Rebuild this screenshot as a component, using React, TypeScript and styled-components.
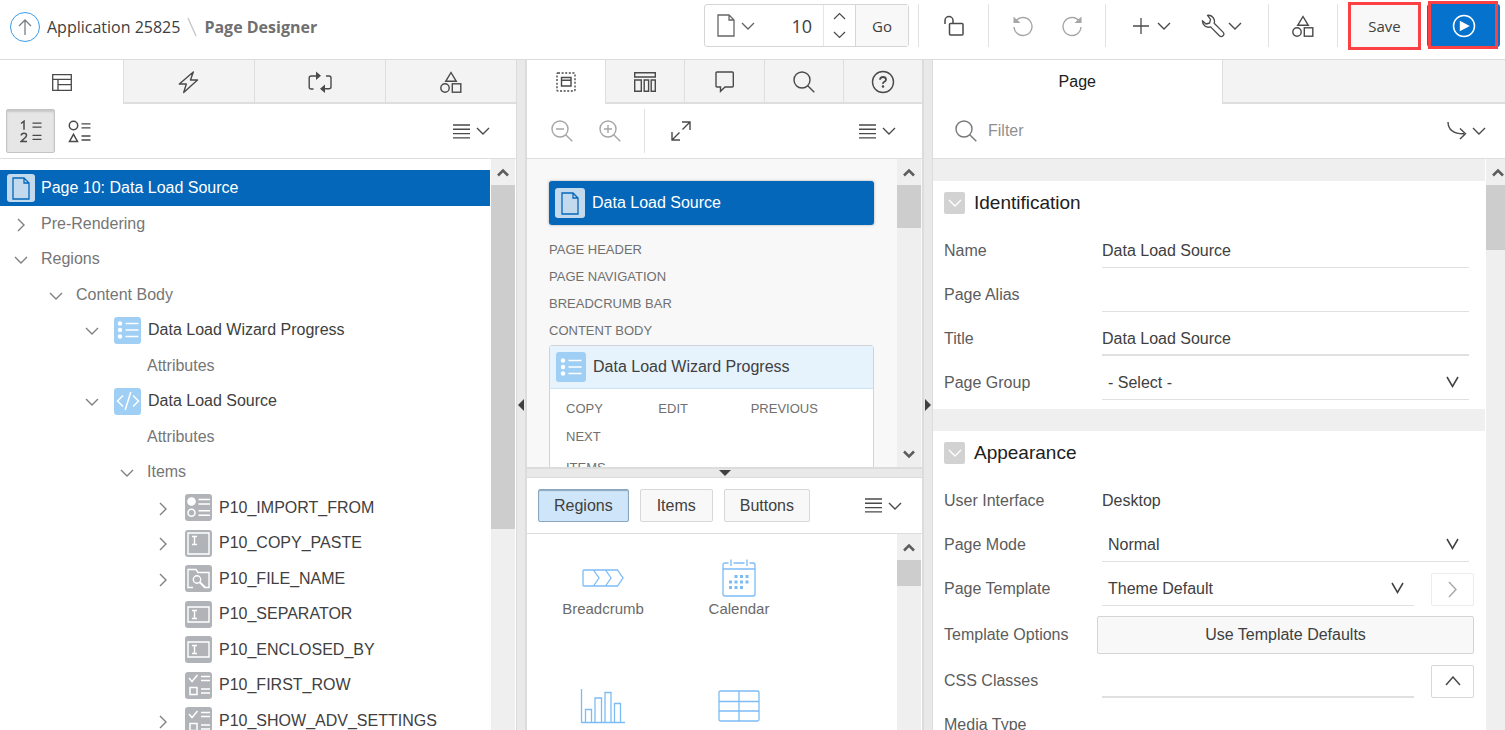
import React from "react";
import styled, { createGlobalStyle, css } from "styled-components";

const sans = `"Liberation Sans", Arial, sans-serif`;
const humanist = `"Open Sans", "Noto Sans", sans-serif`;

const GlobalStyle = createGlobalStyle`
  *, *::before, *::after { box-sizing: border-box; }
  body { margin: 0; background: #fff; color: #404040; font: 16px/20px ${sans}; }
  button, input, select { font: inherit; color: inherit; margin: 0; }
  ul { list-style: none; margin: 0; padding: 0; }
  svg { display: block; flex: none; }
`;

/* ---------- icons ---------- */

type IconProps = { w: number; h: number; sw?: number; color?: string; children: React.ReactNode };

const Icon = ({ w, h, sw = 1, color = "currentColor", children }: IconProps) => (
  <svg
    width={w}
    height={h}
    viewBox={`0 0 ${w} ${h}`}
    fill="none"
    stroke={color}
    strokeWidth={sw}
    aria-hidden="true"
  >
    {children}
  </svg>
);

const ChevronDown = () => (
  <Icon w={14} h={8} sw={1.4}><path d="M1 1l6 6 6-6" /></Icon>
);
const ChevronRight = () => (
  <Icon w={8} h={14} sw={1.4}><path d="M1 1l6 6-6 6" /></Icon>
);
const LargeRight = () => (
  <Icon w={9} h={17} sw={1.4}><path d="M1 1l7 7.500-7 7.500" /></Icon>
);
const ChevronUp = () => (
  <Icon w={16} h={10} sw={1.5}><path d="M1 9l7-8 7 8" /></Icon>
);
const SmallUp = () => (
  <Icon w={13} h={8} sw={1.2}><path d="M1 7l5.500-5.500 5.500 5.500" /></Icon>
);
const SmallDown = () => (
  <Icon w={13} h={8} sw={1.2}><path d="M1 1l5.500 5.500 5.500-5.500" /></Icon>
);
const MenuLines = () => (
  <Icon w={17} h={15} sw={1.4}><path d="M0 1h17M0 5.300h17M0 9.600h17M0 13.900h17" /></Icon>
);
const ArrowUp = () => (
  <Icon w={14} h={16} sw={1.3} color="#7a7f85"><path d="M7 16V1M1 7l6-6 6 6" /></Icon>
);
const PageIcon = () => (
  <Icon w={18} h={23} sw={1.3}><path d="M1 1h11l5 5v16H1zM12 1v5h5" /></Icon>
);
const Slash = () => (
  <Icon w={10} h={20} sw={1.3} color="#c4c4c4"><path d="M1 1l8 18" /></Icon>
);
const LockOpen = () => (
  <Icon w={20} h={21} sw={1.5}>
    <path d="M1 9V5.500a4 4 0 0 1 8 0V8" />
    <rect x="5.500" y="8.500" width="13.500" height="11.500" rx="1" />
  </Icon>
);
const Undo = () => (
  <Icon w={22} h={22} sw={1.4}>
    <path d="M3.500 6.500A9 9 0 1 1 2 12" />
    <path d="M1.500 1.500v6.500h7z" fill="currentColor" stroke="none" />
  </Icon>
);
const Redo = () => (
  <Icon w={22} h={22} sw={1.4}>
    <path d="M18.500 6.500A9 9 0 1 0 20 12" />
    <path d="M20.500 1.500v6.500h-7z" fill="currentColor" stroke="none" />
  </Icon>
);
const Plus = () => (
  <Icon w={18} h={18} sw={1.3}><path d="M9 1v16M1 9h16" /></Icon>
);
const Wrench = () => (
  <Icon w={24} h={24} sw={1.3}>
    <path
      d="M6.500 1.300A6.200 6.200 0 0 1 13.200 9.300L22 18.100a2.500 2.500 0 0 1-3.600 3.600L9.600 12.900A6.200 6.200 0 0 1 1.400 6.700l3.600 3.300 3.600-1 .9-3.600z"
      strokeLinejoin="round"
    />
  </Icon>
);
const Shapes = () => (
  <Icon w={22} h={22} sw={1.4}>
    <path d="M11 1.500l5.300 8.800H5.700z" />
    <circle cx="5" cy="17" r="4.200" />
    <rect x="12.300" y="12.800" width="8.500" height="8.400" />
  </Icon>
);
const Play = () => (
  <Icon w={24} h={24} sw={1.5} color="#fff">
    <circle cx="12" cy="12" r="10.500" />
    <path d="M7.800 6.800v10.400l10-5.200z" fill="#fff" stroke="none" />
  </Icon>
);
const LayoutIcon = () => (
  <Icon w={20} h={17} sw={1.3}><path d="M.700 .700h18.600v15.600H.700zM.700 5.300h18.600M6 5.300v11M6 10.700h13.300" /></Icon>
);
const Bolt = () => (
  <Icon w={21} h={23} sw={1.4}><path d="M15.300 1L1.300 13h7L5.700 21.500 19.500 9h-7z" strokeLinejoin="round" /></Icon>
);
const Cycle = () => (
  <Icon w={24} h={22} sw={1.4}>
    <path d="M5.500 18H3.200q-2 0-2-2V7q0-2 2-2H8M18 5h3q2 0 2 2v8.700q0 2-2 2h-4" />
    <path d="M8 .500v8.600L13 4.800zM17 13.400v8.600l-5-4.300z" fill="currentColor" stroke="none" />
  </Icon>
);
const RenderIcon = () => (
  <Icon w={20} h={20} sw={1.4}>
    <rect x="1" y="1" width="18" height="18" rx="1" strokeDasharray="2 1.600" />
    <path d="M5.500 5.500h9.500v8.500H5.500zM5.500 8.300h9.500" />
  </Icon>
);
const ColumnsIcon = () => (
  <Icon w={22} h={20} sw={1.4}>
    <path d="M.700 .700h20.600v4.300H.700zM.700 8h6.600v11.300H.700zM10.200 8h4.400v11.300h-4.400zM17.200 8h4.100v11.300h-4.100z" />
  </Icon>
);
const Comment = () => (
  <Icon w={19} h={22} sw={1.4}><path d="M2 1h15.300q1 0 1 1v13q0 1-1 1H10l-4.500 4.300V16H2q-1 0-1-1V2q0-1 1-1z" /></Icon>
);
const Search = () => (
  <Icon w={22} h={22} sw={1.4}><circle cx="9" cy="9" r="8" /><path d="M14.700 14.700l6.600 6.600" /></Icon>
);
const ZoomOut = () => (
  <Icon w={22} h={22} sw={1.4}><circle cx="9" cy="9" r="8" /><path d="M14.700 14.700l6.600 6.600M5 9h8" /></Icon>
);
const ZoomIn = () => (
  <Icon w={22} h={22} sw={1.4}><circle cx="9" cy="9" r="8" /><path d="M14.700 14.700l6.600 6.600M5 9h8M9 5v8" /></Icon>
);
const Help = () => (
  <Icon w={24} h={24} sw={1.4}>
    <circle cx="12" cy="12" r="10.500" />
    <path d="M9 9.700q.2-2.700 3-2.700t3 2.500q0 1.500-1.600 2.300T12 14" strokeWidth="1.800" />
    <circle cx="12" cy="16.500" r=".6" fill="currentColor" />
  </Icon>
);
const OneTwo = () => (
  <Icon w={22} h={23} sw={1.5}>
    <path d="M1 3.500l3-2.300v8.600M1.200 15.500q.3-2.200 2.800-2.200t2.500 2q0 1.300-1.700 2.700L1.200 21.500H7" />
    <path d="M12.500 3.200h9M12.500 7.200h9M12.500 15.400h9M12.500 19.400h9" strokeWidth="1.300" />
  </Icon>
);
const ShapeList = () => (
  <Icon w={23} h={23} sw={1.5}>
    <circle cx="5.500" cy="5.500" r="4.200" />
    <path d="M5.500 14.300l4 7.200h-8z" />
    <path d="M13.500 3.800h9M13.500 7.800h9M13.500 16h9M13.500 20h9" strokeWidth="1.300" />
  </Icon>
);
const Expand = () => (
  <Icon w={20} h={20} sw={1.4}><path d="M11.500 8.500L19 1M11 1h8v8M8.500 11.500L1 19M1 11v8h8" /></Icon>
);
const Jump = () => (
  <Icon w={20} h={18} sw={1.4}><path d="M1 0q.3 12 16 11.800M13 6.500l5.500 5.300-5.500 5.300" /></Icon>
);
const ListGlyph = () => (
  <Icon w={22} h={20} sw={1.4}>
    <path d="M8.500 3.500h13M8.500 10h13M8.500 16.500h13" />
    <g fill="currentColor" stroke="none">
      <circle cx="3" cy="3.500" r="2.200" /><circle cx="3" cy="10" r="2.200" /><circle cx="3" cy="16.500" r="2.200" />
    </g>
  </Icon>
);
const CodeGlyph = () => (
  <Icon w={24} h={20} sw={1.5}><path d="M7 4.500L1.500 10 7 15.500M17 4.500l5.500 5.500-5.500 5.500M14.800 1L9.200 19" /></Icon>
);
const RadioGlyph = () => (
  <Icon w={23} h={21} sw={1.5}>
    <circle cx="4.500" cy="4.500" r="4.300" fill="currentColor" stroke="none" />
    <circle cx="4.500" cy="15.800" r="3.500" />
    <path d="M11.500 2.500H23M11.500 7H23M11.500 13.700H23M11.500 18.200H23" />
  </Icon>
);
const TextareaGlyph = () => (
  <Icon w={23} h={23} sw={1.4}><path d="M1 1h21v21H1zM5 4.500h5M7.500 4.500v8M5 12.500h5" /></Icon>
);
const FileGlyph = () => (
  <Icon w={23} h={21} sw={1.4}>
    <path d="M6 19.500H1V1.500h8l2 3h11v15h-4" />
    <circle cx="10" cy="11.500" r="3.700" />
    <path d="M12.800 14.300l5.500 5.500" strokeWidth="2" />
  </Icon>
);
const TextGlyph = () => (
  <Icon w={23} h={17} sw={1.4}><path d="M1 1h21v15H1zM5 4.500h5M7.500 4.500v8M5 12.500h5" /></Icon>
);
const CheckGlyph = () => (
  <Icon w={22} h={22} sw={1.5}>
    <path d="M1 4l3 3.500L9.500 1M2 13.500h7v7H2zM13 2.500h9M13 6.500h9M13 15h9M13 19h9" />
  </Icon>
);
const BreadcrumbArt = () => (
  <Icon w={42} h={18} sw={1.3}>
    <path d="M2 1h33.500L41 9l-5.500 8H2q-1 0-1-1V2q0-1 1-1zM11.500 1L17 9l-5.500 8M23.500 1L29 9l-5.500 8" />
  </Icon>
);
const CalendarArt = () => (
  <Icon w={34} h={38} sw={1.3}>
    <path d="M6.500 4H3Q1 4 1 6v29q0 2 2 2h28q2 0 2-2V6q0-2-2-2h-3.500M11.500 4h11M1 10h32M9 .500v6.500M25 .500v6.500" />
    <path d="M12.500 17.500h15M7 23h20.500M7 28.500h15" strokeWidth="3" strokeDasharray="3 2.500" />
  </Icon>
);
const ChartArt = () => (
  <Icon w={46} h={36} sw={1.3}>
    <path d="M1.500 1v33.500H45M5.500 34.500V21.500h6v13M15 34.500V10h6.500v24.500M25 34.500V4.500h6v30M34.500 34.500V15.500h6v19" />
  </Icon>
);
const TableArt = () => (
  <Icon w={42} h={32} sw={1.3}>
    <rect x="1" y="1" width="40" height="30" rx="1.500" />
    <path d="M21 1v30M1 11.500h40M1 21h40" />
  </Icon>
);

/* ---------- header ---------- */

const Shell = styled.div`
  display: flex;
  flex-direction: column;
  height: 100vh;
  overflow: hidden;
`;

const Header = styled.header`
  flex: none;
  display: flex;
  align-items: center;
  height: 60px;
  padding: 0 5px 8px 10px;
  border-bottom: 1px solid #dcdcdc;
  font-family: ${humanist};
`;

const Crumbs = styled.nav`
  display: flex;
  align-items: center;
  gap: 7px;
  padding-top: 2px;
`;

const UpLink = styled.a`
  display: grid;
  place-items: center;
  width: 30px;
  height: 30px;
  border: 1px solid #3a9bea;
  border-radius: 50%;
`;

const CrumbLink = styled.a`
  color: #404040;
  text-decoration: none;
`;

const CrumbCurrent = styled.strong`
  color: #707070;
`;

const HeaderTools = styled.div`
  display: flex;
  align-items: center;
  height: 43px;
  margin-left: auto;
`;

const bare = css`
  display: inline-flex;
  align-items: center;
  justify-content: center;
  padding: 0;
  border: 0;
  background: none;
`;

const IconButton = styled.button<{ $gap?: number; $muted?: boolean }>`
  ${bare}
  gap: ${(p) => p.$gap ?? 0}px;
  color: ${(p) => (p.$muted ? "#a6a6a6" : "#4a4a4a")};
`;

const ToolGroup = styled.div<{ $width: number; $gap?: number }>`
  display: flex;
  align-items: center;
  justify-content: center;
  gap: ${(p) => p.$gap ?? 0}px;
  width: ${(p) => p.$width}px;
  height: 100%;
  border-left: 1px solid #e2e2e2;
`;

const PageSelector = styled.div`
  display: flex;
  height: 100%;
  margin-right: 9px;
  border: 1px solid #d6d6d6;
  border-radius: 3px;
`;

const PagePicker = styled(IconButton)`
  width: 62px;
  color: #666;
`;

const PageNumber = styled.input`
  width: 57px;
  padding: 0 11px 0 0;
  border: 0;
  border-right: 1px solid #e6e6e6;
  background: none;
  text-align: right;
  font-size: 18px;
`;

const Stepper = styled.div`
  display: grid;
  width: 31px;
  padding: 2px 0;
`;

const GoButton = styled.button`
  width: 53px;
  padding: 0;
  border: 0;
  border-left: 1px solid #d6d6d6;
  background: #f8f8f8;
  font-size: 15px;
`;

const SaveButton = styled.button`
  width: 73px;
  height: 48px;
  margin: 0 6px 0 10px;
  border: 3px solid #fb4143;
  background: #f8f8f8;
  font-size: 15px;
`;

const RunButton = styled.button`
  ${bare}
  position: relative;
  width: 73px;
  height: 43px;
  border-radius: 3px;
  background: #0572ce;

  &::after {
    content: "";
    position: absolute;
    inset: -3px 2px -2px 1px;
    border: 3px solid #fb4143;
  }
`;

/* ---------- panels ---------- */

const Workspace = styled.main`
  flex: 1;
  min-height: 0;
  display: grid;
  grid-template-columns: minmax(0, 516fr) 11px minmax(0, 395fr) 11px minmax(0, 572fr);
`;

const Panel = styled.section`
  display: flex;
  flex-direction: column;
  min-width: 0;
  min-height: 0;
`;

const TabBar = styled.div`
  flex: none;
  display: flex;
  height: 44px;
`;

const Tab = styled.button<{ $active?: boolean; $basis?: string }>`
  ${bare}
  flex: ${(p) => p.$basis ?? "1 1 0"};
  color: #4a4a4a;
  background: ${(p) => (p.$active ? "#fff" : "#f3f3f3")};
  box-shadow: ${(p) => (p.$active ? "none" : "inset 0 -2px #dedede")};

  & + & { border-left: 1px solid #dedede; }
`;

const TextTab = styled(Tab)`
  color: #202020;
`;

const TabFiller = styled.div`
  flex: 283 1 0;
  background: #f3f3f3;
  border-left: 1px solid #dedede;
  border-bottom: 2px solid #dedede;
`;

const Toolbar = styled.div<{ $pad: string; $height?: number }>`
  flex: none;
  display: flex;
  align-items: center;
  height: ${(p) => p.$height ?? 55}px;
  padding: ${(p) => p.$pad};
  border-bottom: 1px solid #dedede;
`;

const ToggleButton = styled.button<{ $on?: boolean }>`
  ${bare}
  width: 49px;
  height: 44px;
  color: #4a4a4a;
  border-radius: 2px;
  ${(p) =>
    p.$on &&
    css`
      background: #e6e6e6;
      border: 1px solid #c4c4c4;
      box-shadow: inset 0 2px 2px #c8c8c8;
    `}
`;

const ToolButton = styled(IconButton)`
  width: 48px;
  height: 44px;
`;

const ToolbarSection = styled.div`
  display: flex;
  align-items: center;
  justify-content: center;
  width: 72px;
  height: 44px;
  margin-left: 10px;
  border-left: 1px solid #e2e2e2;
`;

const MenuButton = styled(IconButton)`
  margin-left: auto;
  gap: 6px;
`;

const ScrollArea = styled.div<{ $bg?: string }>`
  flex: 1;
  min-height: 0;
  display: flex;
  background: ${(p) => p.$bg ?? "#fff"};
`;

const ScrollBody = styled.div`
  flex: 1;
  min-width: 0;
  overflow: hidden;
`;

const Track = styled.div<{ $width: number }>`
  flex: none;
  display: flex;
  flex-direction: column;
  width: ${(p) => p.$width}px;
  margin: 0 1px;
  overflow: hidden;
  background: #efefef;
`;

const EdgeTrack = styled(Track)`
  margin-right: 0;
`;

const TrackButton = styled.button`
  ${bare}
  flex: none;
  width: 24px;
  height: 26px;
  color: #5c5c5c;
`;

const Thumb = styled.div<{ $height: number }>`
  flex: 0 1 ${(p) => p.$height}px;
  background: #cdcdcd;
`;

const TrackEnd = styled.div`
  margin-top: auto;
`;

const TrackUp = () => (
  <TrackButton aria-label="Scroll up">
    <Icon w={12} h={9} sw={2.5}><path d="M1 7.500l5-5 5 5" /></Icon>
  </TrackButton>
);
const TrackDown = () => (
  <TrackButton aria-label="Scroll down">
    <Icon w={12} h={9} sw={2.5}><path d="M1 1.500l5 5 5-5" /></Icon>
  </TrackButton>
);

const Splitter = styled.div<{ $side: "left" | "right" }>`
  display: flex;
  align-items: center;
  justify-content: center;
  padding-top: 20px;
  background: #e9e9e9;
  border-style: solid;
  border-color: #dcdcdc;
  border-width: ${(p) => (p.$side === "left" ? "0 2px 0 1px" : "0 1px 0 2px")};
`;

const RowSplitter = styled.div`
  flex: none;
  display: flex;
  justify-content: center;
  height: 11px;
  background: #e9e9e9;
  border-top: 2px solid #dcdcdc;
  border-bottom: 1px solid #dcdcdc;
`;

const SplitHandle = styled.button`
  ${bare}
  color: #404040;
`;

/* ---------- tree ---------- */

const indent = [0, 35, 71, 106, 142];

const Tree = styled.ul`
  padding-top: 11px;
`;

const TreeRow = styled.li<{ $depth: number; $tone: "selected" | "muted" | "strong" }>`
  display: flex;
  align-items: center;
  height: 36px;
  padding-left: ${(p) => indent[p.$depth]}px;
  white-space: nowrap;
  color: ${(p) => ({ selected: "#fff", muted: "#767676", strong: "#404040" })[p.$tone]};
  background: ${(p) => (p.$tone === "selected" ? "#0467ba" : "none")};

  &:nth-child(even) { height: 35px; }
`;

const Twisty = styled.button`
  ${bare}
  width: 41px;
  height: 100%;
  padding-top: 2px;
  color: #808080;
`;

const TwistySpace = styled.span`
  width: 41px;
`;

const badgeColors = {
  page: ["#c3d9ee", "#0467ba"],
  region: ["#9fcff5", "#fff"],
  item: ["#b0b4b8", "#fff"],
};

const Badge = styled.span<{ $kind: keyof typeof badgeColors; $size?: number }>`
  display: grid;
  place-items: center;
  flex: none;
  width: ${(p) => p.$size ?? 27}px;
  height: ${(p) => p.$size ?? 27}px;
  border-radius: 3px;
  background: ${(p) => badgeColors[p.$kind][0]};
  color: ${(p) => badgeColors[p.$kind][1]};
`;

const TreeBadge = styled(Badge)`
  margin: 0 7px 0 2px;
`;

const RootBadge = styled(Badge)`
  margin: 0 6px 0 7px;
`;

type Node = { text: string; depth: number; open?: boolean; kind?: "region" | "item"; glyph?: React.ReactNode };

const nodes: Node[] = [
  { text: "Pre-Rendering", depth: 0, open: false },
  { text: "Regions", depth: 0, open: true },
  { text: "Content Body", depth: 1, open: true },
  { text: "Data Load Wizard Progress", depth: 2, open: true, kind: "region", glyph: <ListGlyph /> },
  { text: "Attributes", depth: 3 },
  { text: "Data Load Source", depth: 2, open: true, kind: "region", glyph: <CodeGlyph /> },
  { text: "Attributes", depth: 3 },
  { text: "Items", depth: 3, open: true },
  { text: "P10_IMPORT_FROM", depth: 4, open: false, kind: "item", glyph: <RadioGlyph /> },
  { text: "P10_COPY_PASTE", depth: 4, open: false, kind: "item", glyph: <TextareaGlyph /> },
  { text: "P10_FILE_NAME", depth: 4, open: false, kind: "item", glyph: <FileGlyph /> },
  { text: "P10_SEPARATOR", depth: 4, kind: "item", glyph: <TextGlyph /> },
  { text: "P10_ENCLOSED_BY", depth: 4, kind: "item", glyph: <TextGlyph /> },
  { text: "P10_FIRST_ROW", depth: 4, kind: "item", glyph: <CheckGlyph /> },
  { text: "P10_SHOW_ADV_SETTINGS", depth: 4, open: false, kind: "item", glyph: <CheckGlyph /> },
];

/* ---------- layout canvas ---------- */

const Canvas = styled(ScrollBody)`
  padding: 22px 22px 0;
`;

const PageCard = styled.div`
  display: flex;
  align-items: center;
  gap: 7px;
  height: 44px;
  margin-bottom: 11px;
  padding: 0 6px;
  border-radius: 3px;
  background: #0467ba;
  color: #fff;
  box-shadow: 0 0 2px 1px #d4d4d4;
`;

const Slot = styled.div`
  font-size: 13px;
  line-height: 27px;
  color: #707070;
  text-transform: uppercase;
`;

const RegionCard = styled.div`
  border: 1px solid #d0d4d8;
  border-radius: 3px 3px 0 0;
  background: #fff;
  margin-top: 1px;
`;

const RegionHead = styled.div`
  display: flex;
  align-items: center;
  gap: 7px;
  height: 43px;
  padding: 0 6px;
  border-bottom: 1px solid #cfe2f1;
  background: #e6f3fd;
`;

const SlotGrid = styled.div`
  display: grid;
  grid-template-columns: repeat(3, 1fr);
  row-gap: 1px;
  padding: 6px 30px 4px 16px;
`;

const SlotBlock = styled.div`
  padding: 0 16px;
`;

/* ---------- component gallery ---------- */

const Gallery = styled(Panel)`
  flex: none;
  height: 252px;
`;

const PillButton = styled.button<{ $on?: boolean }>`
  height: 33px;
  padding: 0 15px;
  min-width: 73px;
  margin-right: 11px;
  border: 1px solid ${(p) => (p.$on ? "#8ba6bf" : "#d8d8d8")};
  border-radius: 2px;
  background: ${(p) => (p.$on ? "#cfe6fa" : "#f8f8f8")};
  box-shadow: ${(p) => (p.$on ? "inset 0 1px 1px #8ba6bf" : "none")};
`;

const TileGrid = styled(ScrollBody)`
  display: grid;
  grid-template-columns: repeat(2, 136px);
  grid-auto-rows: 128px;
  padding: 25px 8px 0;
`;

const Tile = styled.button`
  ${bare}
  flex-direction: column;
  justify-content: flex-start;
  gap: 2px;
  font-size: 15px;
  color: #6a6a6a;
`;

const TileArt = styled.span`
  display: grid;
  place-items: center;
  height: 38px;
  color: #7cbcf5;
`;

/* ---------- property editor ---------- */

const FilterInput = styled.input`
  flex: 1;
  min-width: 0;
  margin-left: 11px;
  padding: 0;
  border: 0;
  outline: 0;
  background: none;
  &::placeholder { color: #909090; opacity: 1; }
`;

const FilterLabel = styled.label`
  flex: 1;
  display: flex;
  align-items: center;
  color: #777;
`;

const Group = styled.section`
  padding: 0 11px 4px;
  border-top: 22px solid #efefef;
`;

const GroupHead = styled.h2`
  display: flex;
  align-items: center;
  gap: 9px;
  height: 44px;
  margin: 0 0 4px;
  font-size: 19px;
  font-weight: 400;
  color: #202020;
`;

const GroupToggle = styled.button`
  ${bare}
  width: 21px;
  height: 22px;
  border-radius: 2px;
  background: #d2d2d2;
  color: #fff;
`;

const Property = styled.div<{ $tall?: boolean }>`
  display: grid;
  grid-template-columns: 153px minmax(0, 1fr);
  align-items: center;
  height: ${(p) => (p.$tall ? 48 : 44)}px;
`;

const PropertyLabel = styled.label`
  color: #5c5c5c;
`;

const Field = styled.div<{ $withButton?: boolean }>`
  display: flex;
  align-items: center;
  gap: 17px;
  padding: 0 ${(p) => (p.$withButton ? 0 : 5)}px 0 5px;
`;

const TextInput = styled.input<{ $heavy?: boolean }>`
  flex: 1;
  min-width: 0;
  height: 34px;
  padding: ${(p) => (p.$heavy ? "2px 0 0" : "1px 0 0")};
  border: 0;
  border-bottom: ${(p) => (p.$heavy ? 2 : 1)}px solid #e0e0e0;
  outline: 0;
  background: none;
`;

const SelectBox = styled.div`
  flex: 1;
  position: relative;
  color: #404040;

  svg {
    position: absolute;
    top: 10px;
    right: 10px;
    pointer-events: none;
  }
`;

const SelectInput = styled.select`
  appearance: none;
  width: 100%;
  height: 34px;
  padding: 0 30px 0 6px;
  border: 0;
  border-bottom: 1px solid #e0e0e0;
  background: none;
`;

const SquareButton = styled.button<{ $muted?: boolean }>`
  ${bare}
  width: 43px;
  height: 33px;
  border: 1px solid ${(p) => (p.$muted ? "#ececec" : "#d8d8d8")};
  border-radius: 2px;
  color: ${(p) => (p.$muted ? "#a6a6a6" : "#4a4a4a")};
`;

const WideButton = styled.button`
  height: 38px;
  border: 1px solid #d4d4d4;
  border-radius: 2px;
  background: #f8f8f8;
`;

const Select = ({ id, value }: { id: string; value: string }) => (
  <SelectBox>
    <SelectInput id={id} defaultValue={value}>
      <option>{value}</option>
    </SelectInput>
    <Icon w={13} h={12} sw={1.5}><path d="M1 1l5.500 9.500L12 1" /></Icon>
  </SelectBox>
);

const Menu = ({ label }: { label: string }) => (
  <MenuButton aria-label={label}>
    <MenuLines />
    <ChevronDown />
  </MenuButton>
);

const GroupTitle = ({ children }: { children: string }) => (
  <GroupHead>
    <GroupToggle aria-label={`Toggle ${children}`}><ChevronDown /></GroupToggle>
    {children}
  </GroupHead>
);

export default function App() {
  return (
    <Shell>
      <GlobalStyle />
      <Header>
        <Crumbs aria-label="Breadcrumb">
          <UpLink href="#up" aria-label="Up"><ArrowUp /></UpLink>
          <CrumbLink href="#app">Application 25825</CrumbLink>
          <Slash />
          <CrumbCurrent>Page Designer</CrumbCurrent>
        </Crumbs>
        <HeaderTools>
          <PageSelector>
            <PagePicker $gap={6} aria-label="Page finder"><PageIcon /><ChevronDown /></PagePicker>
            <PageNumber aria-label="Page number" defaultValue="10" />
            <Stepper>
              <IconButton aria-label="Next page"><SmallUp /></IconButton>
              <IconButton aria-label="Previous page"><SmallDown /></IconButton>
            </Stepper>
            <GoButton>Go</GoButton>
          </PageSelector>
          <ToolGroup $width={70}>
            <IconButton aria-label="Lock"><LockOpen /></IconButton>
          </ToolGroup>
          <ToolGroup $width={117} $gap={27}>
            <IconButton $muted aria-label="Undo"><Undo /></IconButton>
            <IconButton $muted aria-label="Redo"><Redo /></IconButton>
          </ToolGroup>
          <ToolGroup $width={163} $gap={30}>
            <IconButton $gap={7} aria-label="Create"><Plus /><ChevronDown /></IconButton>
            <IconButton $gap={3} aria-label="Utilities"><Wrench /><ChevronDown /></IconButton>
          </ToolGroup>
          <ToolGroup $width={69}>
            <IconButton aria-label="Shared components"><Shapes /></IconButton>
          </ToolGroup>
          <ToolGroup $width={1} />
          <SaveButton>Save</SaveButton>
          <RunButton aria-label="Save and run page"><Play /></RunButton>
        </HeaderTools>
      </Header>

      <Workspace>
        <Panel>
          <TabBar>
            <Tab $active $basis="124 1 0" aria-label="Rendering"><LayoutIcon /></Tab>
            <Tab $basis="130 1 0" aria-label="Dynamic actions"><Bolt /></Tab>
            <Tab $basis="131 1 0" aria-label="Processing"><Cycle /></Tab>
            <Tab $basis="131 1 0" aria-label="Page shared components"><Shapes /></Tab>
          </TabBar>
          <Toolbar $pad="0 26px 0 6px">
            <ToggleButton $on aria-label="Group by processing order"><OneTwo /></ToggleButton>
            <ToggleButton aria-label="Group by component type"><ShapeList /></ToggleButton>
            <Menu label="Tree menu" />
          </Toolbar>
          <ScrollArea>
            <ScrollBody>
              <Tree>
                <TreeRow $depth={0} $tone="selected">
                  <RootBadge $kind="page" $size={28}><PageIcon /></RootBadge>
                  Page 10: Data Load Source
                </TreeRow>
                {nodes.map((n, i) => (
                  <TreeRow key={i} $depth={n.depth} $tone={n.kind ? "strong" : "muted"}>
                    {n.open === undefined ? (
                      <TwistySpace />
                    ) : (
                      <Twisty aria-label={`Toggle ${n.text}`}>{n.open ? <ChevronDown /> : <ChevronRight />}</Twisty>
                    )}
                    {n.kind && <TreeBadge $kind={n.kind}>{n.glyph}</TreeBadge>}
                    {n.text}
                  </TreeRow>
                ))}
              </Tree>
            </ScrollBody>
            <Track $width={24}>
              <TrackUp />
              <Thumb $height={344} />
            </Track>
          </ScrollArea>
        </Panel>

        <Splitter $side="left">
          <SplitHandle aria-label="Collapse left panel">
            <Icon w={6} h={12}><path d="M6 0v12L0 6z" fill="currentColor" stroke="none" /></Icon>
          </SplitHandle>
        </Splitter>

        <Panel>
          <TabBar>
            <Tab $active aria-label="Layout"><RenderIcon /></Tab>
            <Tab aria-label="Component view"><ColumnsIcon /></Tab>
            <Tab aria-label="Messages"><Comment /></Tab>
            <Tab aria-label="Page search"><Search /></Tab>
            <Tab aria-label="Help"><Help /></Tab>
          </TabBar>
          <Toolbar $pad="0 26px 0 11px">
            <ToolButton $muted aria-label="Zoom out"><ZoomOut /></ToolButton>
            <ToolButton $muted aria-label="Zoom in"><ZoomIn /></ToolButton>
            <ToolbarSection>
              <IconButton aria-label="Expand"><Expand /></IconButton>
            </ToolbarSection>
            <Menu label="Layout menu" />
          </Toolbar>
          <ScrollArea $bg="#f8f8f8">
            <Canvas>
              <PageCard>
                <Badge $kind="page" $size={30}><PageIcon /></Badge>
                Data Load Source
              </PageCard>
              <Slot>Page Header</Slot>
              <Slot>Page Navigation</Slot>
              <Slot>Breadcrumb Bar</Slot>
              <Slot>Content Body</Slot>
              <RegionCard>
                <RegionHead>
                  <Badge $kind="region" $size={30}><ListGlyph /></Badge>
                  Data Load Wizard Progress
                </RegionHead>
                <SlotGrid>
                  <Slot>Copy</Slot>
                  <Slot>Edit</Slot>
                  <Slot>Previous</Slot>
                  <Slot>Next</Slot>
                </SlotGrid>
                <SlotBlock><Slot>Items</Slot></SlotBlock>
              </RegionCard>
            </Canvas>
            <Track $width={24}>
              <TrackUp />
              <Thumb $height={43} />
              <TrackEnd><TrackDown /></TrackEnd>
            </Track>
          </ScrollArea>
          <RowSplitter>
            <SplitHandle aria-label="Collapse gallery">
              <Icon w={12} h={6}><path d="M0 0h12L6 6z" fill="currentColor" stroke="none" /></Icon>
            </SplitHandle>
          </RowSplitter>
          <Gallery>
            <Toolbar $pad="0 20px 0 11px" $height={56}>
              <PillButton $on>Regions</PillButton>
              <PillButton>Items</PillButton>
              <PillButton>Buttons</PillButton>
              <Menu label="Gallery menu" />
            </Toolbar>
            <ScrollArea>
              <TileGrid>
                <Tile><TileArt><BreadcrumbArt /></TileArt>Breadcrumb</Tile>
                <Tile><TileArt><CalendarArt /></TileArt>Calendar</Tile>
                <Tile aria-label="Chart"><TileArt><ChartArt /></TileArt></Tile>
                <Tile aria-label="Classic report"><TileArt><TableArt /></TileArt></Tile>
              </TileGrid>
              <Track $width={24}>
                <TrackUp />
                <Thumb $height={26} />
              </Track>
            </ScrollArea>
          </Gallery>
        </Panel>

        <Splitter $side="right">
          <SplitHandle aria-label="Collapse right panel">
            <Icon w={6} h={12}><path d="M0 0v12l6-6z" fill="currentColor" stroke="none" /></Icon>
          </SplitHandle>
        </Splitter>

        <Panel>
          <TabBar>
            <TextTab $active $basis="289 1 0">Page</TextTab>
            <TabFiller />
          </TabBar>
          <Toolbar $pad="0 19px 0 22px">
            <FilterLabel>
              <Search />
              <FilterInput aria-label="Filter properties" placeholder="Filter" />
            </FilterLabel>
            <IconButton $gap={5} aria-label="Go to group"><Jump /><ChevronDown /></IconButton>
          </Toolbar>
          <ScrollArea>
            <ScrollBody>
              <Group>
                <GroupTitle>Identification</GroupTitle>
                <Property>
                  <PropertyLabel htmlFor="name">Name</PropertyLabel>
                  <Field><TextInput id="name" defaultValue="Data Load Source" /></Field>
                </Property>
                <Property>
                  <PropertyLabel htmlFor="alias">Page Alias</PropertyLabel>
                  <Field><TextInput id="alias" /></Field>
                </Property>
                <Property>
                  <PropertyLabel htmlFor="title">Title</PropertyLabel>
                  <Field><TextInput id="title" $heavy defaultValue="Data Load Source" /></Field>
                </Property>
                <Property>
                  <PropertyLabel htmlFor="group">Page Group</PropertyLabel>
                  <Field><Select id="group" value="- Select -" /></Field>
                </Property>
              </Group>
              <Group>
                <GroupTitle>Appearance</GroupTitle>
                <Property>
                  <PropertyLabel as="span">User Interface</PropertyLabel>
                  <Field>Desktop</Field>
                </Property>
                <Property>
                  <PropertyLabel htmlFor="mode">Page Mode</PropertyLabel>
                  <Field><Select id="mode" value="Normal" /></Field>
                </Property>
                <Property>
                  <PropertyLabel htmlFor="template">Page Template</PropertyLabel>
                  <Field $withButton>
                    <Select id="template" value="Theme Default" />
                    <SquareButton $muted aria-label="Go to template"><LargeRight /></SquareButton>
                  </Field>
                </Property>
                <Property $tall>
                  <PropertyLabel htmlFor="options">Template Options</PropertyLabel>
                  <WideButton id="options">Use Template Defaults</WideButton>
                </Property>
                <Property>
                  <PropertyLabel htmlFor="css">CSS Classes</PropertyLabel>
                  <Field $withButton>
                    <TextInput id="css" $heavy />
                    <SquareButton aria-label="Pick CSS classes"><ChevronUp /></SquareButton>
                  </Field>
                </Property>
                <Property>
                  <PropertyLabel as="span">Media Type</PropertyLabel>
                </Property>
              </Group>
            </ScrollBody>
            <EdgeTrack $width={19}>
              <TrackUp />
              <Thumb $height={65} />
            </EdgeTrack>
          </ScrollArea>
        </Panel>
      </Workspace>
    </Shell>
  );
}
